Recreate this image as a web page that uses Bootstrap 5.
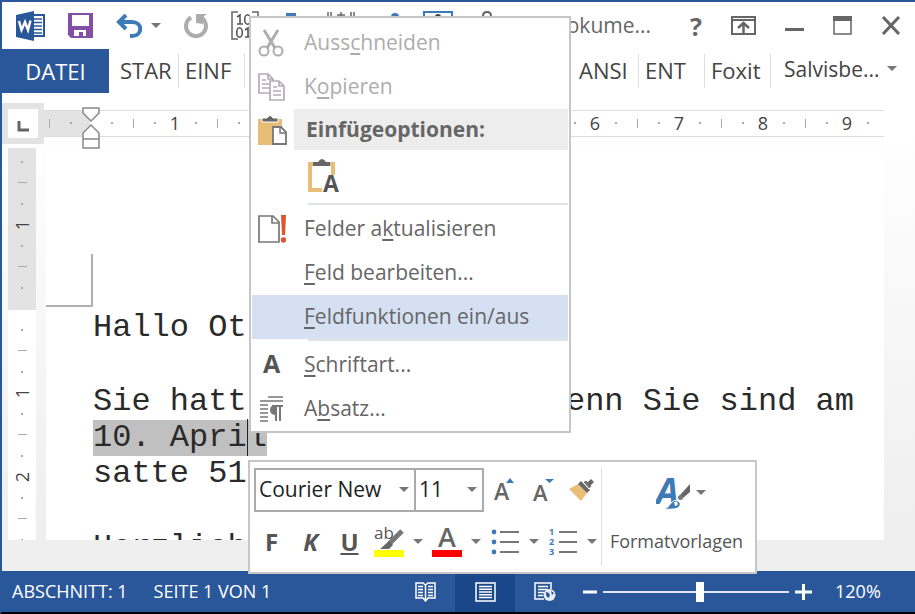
<!DOCTYPE html>
<html lang="de">
<head>
<meta charset="utf-8">
<meta name="viewport" content="width=device-width, initial-scale=1">
<title>Word – Feldfunktionen ein/aus</title>
<link href="https://cdn.jsdelivr.net/npm/bootstrap@5.3.0/dist/css/bootstrap.min.css" rel="stylesheet">
<style>
:root { --word-blue: #2a579a; --ink: #666; --rule: #c6c6c6; }
body { font-family: "Open Sans", "Noto Sans", sans-serif; color: #444; }
button { background: none; border: 0; padding: 0; color: inherit; }
svg { display: block; flex: none; }
.word-window { border-top: 2px solid var(--word-blue); border-left: 2px solid var(--word-blue); border-bottom: 2px solid #000; background: linear-gradient(#fff 20%, #efefef 85%); }

/* title bar */
.title-bar { height: 47px; padding-left: 13px; padding-right: 14px; }
.quick-tools, .covered-tools { gap: 22px; }
.window-tools { gap: 29px; color: #666; }
.doc-title { font-size: 21px; margin-right: 10px; }
.help-mark { font-size: 25px; line-height: 26px; }

/* ribbon tabs */
.ribbon { height: 44px; font-size: 22px; line-height: 44px; }
.ribbon a { color: #444; text-decoration: none; white-space: nowrap; }
.ribbon .file-tab { background: var(--word-blue); color: #fff; width: 107px; text-align: center; }
.tab-item { height: 34px; line-height: 32px; border-right: 1px solid #ddd; padding-left: 6px; }
.tab-narrow { width: 66px; }
.tab-first { width: 70px; padding-left: 11px; }
.account { font-size: 21px; line-height: 36px; padding-left: 13px; width: 144px; }

/* rulers */
.ruler-row { height: 55px; padding-top: 5px; }
.ruler-track { min-width: 0; }
.tab-stop { width: 42px; height: 41px; background: #e3e3e3; border: 6px solid #e3e3e3; flex: none; }
.tab-stop svg { background: #fff; }
.ruler-h { height: 27px; margin-right: 31px; border: solid #ddd; border-width: 1px 0; background: linear-gradient(90deg, #e3e3e3 46px, #fff 46px); padding-left: 5px; overflow: hidden; }
.cell-h { width: 84px; flex: none; text-align: center; font-size: 18px; line-height: 25px;
  background: linear-gradient(#aaa, #aaa) 0 50%/1px 9px no-repeat, linear-gradient(#aaa, #aaa) 21px 50%/2px 2px no-repeat, linear-gradient(#aaa, #aaa) 62px 50%/2px 2px no-repeat; }
.indent-marker { position: absolute; left: 38px; top: -3px; }
.ruler-v { width: 28px; margin-left: 6px; margin-right: 10px; overflow: hidden; background: linear-gradient(#e3e3e3 162px, #fff 162px); }
.cell-v { height: 84px; flex: none;
  background: linear-gradient(#aaa, #aaa) 50% 100%/9px 1px no-repeat, linear-gradient(#aaa, #aaa) 50% calc(100% - 20px)/2px 2px no-repeat, linear-gradient(#aaa, #aaa) 50% calc(100% - 62px)/2px 2px no-repeat; }
.cell-v.cell-short { height: 35px; }
.cell-v span { font-size: 18px; line-height: 18px; writing-mode: vertical-rl; transform: rotate(180deg); }

/* document page */
.workspace { flex: 1 1 0; min-height: 0; }
.sheet { background: #fff; margin-right: 31px; overflow: hidden; padding-right: 30px; }
.corner-mark { width: 47px; height: 53px; margin-top: 106px; border: solid #b0b0b0; border-width: 0 2px 2px 0; }
.doc-text { font-family: "Liberation Mono", monospace; font-size: 32px; line-height: 36px; color: #2a2a2a; padding-left: 47px; padding-top: 3px; white-space: nowrap; }
.doc-text p { margin-bottom: 38px; }
.picked { background: #c0c0c0; display: inline-block; }
.text-caret { border-left: 1px solid #222; }
.below-sheet { height: 31px; background: #efefef; }

/* status bar */
.status-bar { height: 41px; background: var(--word-blue); color: #fff; font-size: 18px; padding-left: 10px; padding-right: 32px; }
.page-info { gap: 26px; }
.view-btn { width: 60px; height: 41px; }
.view-btn.chosen { background: #19478a; }
.zoom-range { appearance: none; background: none; width: 186px; height: 20px; margin: 0 6px; }
.zoom-range::-webkit-slider-runnable-track { height: 2px; background: #dfe6f1; }
.zoom-range::-webkit-slider-thumb { appearance: none; width: 8px; height: 20px; margin-top: -9px; background: #fff; }
.zoom-value { width: 48px; margin-left: 23px; }

/* context menu */
.context-panel { position: absolute; left: 249px; top: 16px; width: 322px; background: #fff; border: 2px solid var(--rule); padding: 3px 1px 0; z-index: 5; }
.menu-line { display: flex; align-items: center; width: 100%; height: 44px; padding-left: 6px; font-size: 21px; color: var(--ink); text-align: left; white-space: nowrap; }
.menu-line .icon-slot { width: 31px; margin-right: 15px; flex: none; }
.menu-line.faded { color: #adadad; }
.menu-line.hovered { background: #d5e0f2; }
.menu-line u { text-underline-offset: 3px; }
.menu-heading { height: 41px; padding-left: 6px; }
.menu-heading h2 { background: #ededed; font-size: 21px; line-height: 41px; color: #666; padding-left: 12px; }
.menu-heading .icon-slot { width: 36px; flex: none; }
.paste-row { height: 53px; padding-left: 54px; padding-top: 8px; }
.menu-rule { height: 2px; margin-left: 56px; margin-bottom: 2px; background: #dfe3e6; }

/* mini toolbar */
.mini-bar { position: absolute; left: 248px; top: 460px; width: 509px; height: 114px; background: #fff; border: 2px solid var(--rule); padding: 6px 4px; z-index: 6; color: #555; }
.mini-select { appearance: none; height: 44px; border: 2px solid #ababab; border-radius: 0; color: #222; font-size: 21px; padding: 0 3px; background: #fff url("data:image/svg+xml,%3Csvg xmlns='http://www.w3.org/2000/svg' viewBox='0 0 10 6'%3E%3Cpath d='M0 0h10L5 5z' fill='%23777'/%3E%3C/svg%3E") right 5px center/10px 6px no-repeat; }
.font-select { width: 162px; }
.size-select { width: 70px; margin-left: -2px; }
.tool-btn { width: 39px; height: 44px; display: flex; align-items: center; justify-content: center; font-size: 24px; line-height: 28px; }
.drop-btn { width: 19px; height: 44px; display: flex; align-items: center; justify-content: center; }
.tools-row { margin-left: -2px; margin-top: 8px; margin-right: -2px; }
.styles-part { border-left: 1px solid #ddd; font-size: 18px; line-height: 27px; }
.styles-icon { height: 50px; padding-left: 8px; }
.styles-label { padding-top: 10px; }
</style>
</head>
<body>
<svg class="d-none" aria-hidden="true">
  <symbol id="caret" viewBox="0 0 10 6"><path d="M0 0h10L5 5z" fill="#777"/></symbol>
</svg>
<div class="word-window d-flex flex-column vh-100 position-relative overflow-hidden">

  <header class="title-bar flex-shrink-0 d-flex align-items-center justify-content-between">
    <div class="quick-tools d-flex align-items-center">
      <svg width="31" height="30" viewBox="0 0 31 30" role="img" aria-label="Word"><path d="M17 4h12v21H17z" fill="#fff" stroke="#2a579a" stroke-width="2"/><path d="M19 8h8M19 11.500h8M19 15h8M19 18.500h8M19 22h8" stroke="#2a579a" stroke-width="1.500"/><path d="M1 4 19 0v30L1 26z" fill="#2a579a"/><path d="M4 10l2.500 9L10 11l3 8 2.500-9.500" fill="none" stroke="#fff" stroke-width="2.400"/></svg>
      <button type="button" aria-label="Speichern"><svg width="25" height="25" viewBox="0 0 25 25"><path d="M0 0h25v25H3l-3-3z" fill="#8450a6"/><path d="M4 2h17v11H4zM6 17h12v6h-3v-4h-4v4H6z" fill="#fff"/></svg></button>
      <div class="d-flex align-items-center gap-2">
        <button type="button" aria-label="Rückgängig"><svg width="28" height="24" viewBox="0 0 28 24"><path d="M11 1 4 8l7 7M4 8h13c11 0 11 14 0 14h-2" fill="none" stroke="#3f7ab8" stroke-width="4"/></svg></button>
        <button type="button" aria-label="Rückgängig-Liste"><svg width="10" height="6"><use href="#caret"/></svg></button>
      </div>
      <button type="button" aria-label="Wiederholen"><svg width="26" height="26" viewBox="0 0 26 26"><path d="M8 4.500a10 10 0 1 0 10 0" fill="none" stroke="#adadad" stroke-width="4"/><path d="M13 1h11l-3 2-1 8-7-1z" fill="#adadad"/></svg></button>
      <svg width="30" height="30" viewBox="0 0 30 30"><path d="M7 1H1v27h6M21 1h6v27h-6" fill="none" stroke="#666" stroke-width="1.500"/><g fill="none" stroke="#555" stroke-width="1.600"><path d="M6 6l3-2v9M6 13h6M14 19l3-2v9M14 26h6"/><ellipse cx="16.500" cy="8.500" rx="2.800" ry="4.800"/><ellipse cx="8.500" cy="21.500" rx="2.800" ry="4.800"/></g></svg>
      <div class="covered-tools d-flex align-items-start">
        <svg width="22" height="24" viewBox="0 0 22 24"><path d="M3 2h10v14H3z" fill="#3f7ab8"/></svg>
        <svg width="28" height="26" viewBox="0 0 28 26"><path d="M1 1v6M4 1v6M24 1v6M27 1v6M14 1v14M10 4h8" stroke="#666" stroke-width="1.500"/></svg>
        <svg width="24" height="24" viewBox="0 0 24 24"><circle cx="18" cy="6" r="4" fill="#3f7ab8"/></svg>
        <svg width="30" height="30" viewBox="0 0 30 30"><path d="M1 1h28v28H1z" fill="none" stroke="#3f7ab8" stroke-width="2"/><circle cx="15" cy="6" r="3" fill="#444"/></svg>
        <svg width="24" height="30" viewBox="0 0 24 30"><path d="M8 5q0-4 4-4t4 4v4M12 5v5" fill="none" stroke="#666" stroke-width="2"/></svg>
      </div>
    </div>
    <div class="window-tools d-flex align-items-center">
      <span class="doc-title">okume...</span>
      <button type="button" class="help-mark fw-bold" aria-label="Hilfe">?</button>
      <button type="button" aria-label="Menüband-Anzeigeoptionen"><svg width="25" height="19" viewBox="0 0 25 19"><path d="M1 1h23v17H1zM1 4h23" fill="none" stroke="#666" stroke-width="2"/><path d="M12.500 17V7M7 12l5.500-5 5.500 5" fill="none" stroke="#666" stroke-width="2.500"/></svg></button>
      <button type="button" aria-label="Minimieren"><svg width="19" height="19" viewBox="0 0 19 19"><path d="M0 13.500h19" stroke="#666" stroke-width="3"/></svg></button>
      <button type="button" aria-label="Maximieren"><svg width="19" height="19" viewBox="0 0 19 19"><path d="M1 1h17v17H1z" fill="none" stroke="#666" stroke-width="1.500"/><path d="M0 0h19v5H0z" fill="#666"/></svg></button>
      <button type="button" aria-label="Schließen"><svg width="20" height="19" viewBox="0 0 20 19"><path d="M2 1l16 17M18 1 2 18" stroke="#666" stroke-width="3"/></svg></button>
    </div>
  </header>

  <nav class="ribbon flex-shrink-0 d-flex justify-content-between" aria-label="Menüband">
    <div class="d-flex align-items-center">
      <a href="#" class="file-tab">DATEI</a>
      <a href="#" class="tab-item tab-first">STAR</a>
      <a href="#" class="tab-item tab-narrow">EINF</a>
    </div>
    <div class="d-flex align-items-center">
      <a href="#" class="tab-item tab-narrow">ANSI</a>
      <a href="#" class="tab-item tab-narrow">ENT</a>
      <a href="#" class="tab-item tab-narrow">Foxit</a>
      <a href="#" class="account d-flex align-items-center gap-2 pb-1">Salvisbe... <svg width="10" height="6"><use href="#caret"/></svg></a>
    </div>
  </nav>

  <div class="ruler-row flex-shrink-0 d-flex align-items-center">
    <button type="button" class="tab-stop" aria-label="Tabstopp"><svg width="30" height="29" viewBox="0 0 30 29"><path d="M11 12v9h10" fill="none" stroke="#666" stroke-width="3"/></svg></button>
    <div class="ruler-track position-relative flex-grow-1">
      <div class="ruler-h d-flex">
        <span class="cell-h"></span><span class="cell-h">1</span><span class="cell-h"></span><span class="cell-h"></span><span class="cell-h"></span><span class="cell-h"></span><span class="cell-h">6</span><span class="cell-h">7</span><span class="cell-h">8</span><span class="cell-h">9</span>
      </div>
      <svg class="indent-marker" width="18" height="42" viewBox="0 0 18 42"><path d="M1 1h16v5L9 14 1 6zM9 18l8 8v6H1v-6zM1 32h16v9H1z" fill="#fff" stroke="#888" stroke-width="1.500"/></svg>
    </div>
  </div>

  <main class="workspace d-flex overflow-hidden">
    <div class="ruler-v d-flex flex-column flex-shrink-0">
      <div class="cell-v cell-short"></div>
      <div class="cell-v d-flex align-items-center justify-content-center"><span>1</span></div>
      <div class="cell-v"></div>
      <div class="cell-v d-flex align-items-center justify-content-center"><span>1</span></div>
      <div class="cell-v d-flex align-items-center justify-content-center"><span>2</span></div>
      <div class="cell-v"></div>
    </div>
    <article class="sheet flex-grow-1">
      <div class="corner-mark"></div>
      <div class="doc-text">
        <p>Hallo Ot</p>
        <div class="d-flex justify-content-between"><span>Sie hatt</span><span>enn Sie sind am</span></div>
        <div><span class="picked">10. Apri<span class="text-caret">l</span></span></div>
        <p>satte 51</p>
        <p>Herzlich</p>
      </div>
    </article>
  </main>
  <div class="below-sheet flex-shrink-0"></div>

  <footer class="status-bar flex-shrink-0 d-flex align-items-center justify-content-between">
    <div class="page-info d-flex"><span>ABSCHNITT: 1</span><span>SEITE 1 VON 1</span></div>
    <div class="d-flex align-items-center">
      <button type="button" class="view-btn d-flex align-items-center justify-content-center" aria-label="Lesemodus"><svg width="21" height="20" viewBox="0 0 21 20" fill="none" stroke="#fff" stroke-width="1.500"><path d="M1 1h7l2.500 2L13 1h7v15h-7l-2.500 3L8 16H1zM10.500 3v15"/><path d="M3 4.500h5M3 7.500h5M3 10.500h5M3 13.500h5M13 4.500h5M13 7.500h5M13 10.500h5M13 13.500h5"/></svg></button>
      <button type="button" class="view-btn chosen d-flex align-items-center justify-content-center" aria-label="Seitenlayout"><svg width="21" height="20" viewBox="0 0 21 20" fill="none" stroke="#fff" stroke-width="1.500"><path d="M1 1h19v18H1zM4 4.500h13M4 7.200h13M4 10h13M4 12.700h13M4 15.500h13"/></svg></button>
      <button type="button" class="view-btn d-flex align-items-center justify-content-center" aria-label="Weblayout"><svg width="22" height="20" viewBox="0 0 22 20"><path d="M17 7V1H1v16h9M4 4.500h10M4 7.500h10M4 10.500h6M4 13.500h5" fill="none" stroke="#fff" stroke-width="1.500"/><circle cx="15.500" cy="13" r="6" fill="#e8eef7"/><path d="M12 10l3 1 1 3-2 2-2-3zM17 9l3 2-2 2z" fill="#2a579a"/></svg></button>
      <button type="button" class="ms-2" aria-label="Verkleinern"><svg width="14" height="18" viewBox="0 0 14 18"><path d="M0 9h14" stroke="#fff" stroke-width="3"/></svg></button>
      <input type="range" class="zoom-range" min="0" max="100" value="52" aria-label="Zoom">
      <button type="button" aria-label="Vergrößern"><svg width="17" height="18" viewBox="0 0 17 18"><path d="M0 9h17M8.500 1v16" stroke="#fff" stroke-width="3"/></svg></button>
      <span class="zoom-value">120%</span>
    </div>
  </footer>
</div>

<div class="context-panel" role="menu">
  <button type="button" class="menu-line faded" role="menuitem"><span class="icon-slot"><svg width="26" height="28" viewBox="0 0 26 28" fill="none" stroke="#adadad"><path d="M6 1l11 18M20 1 9 19" stroke-width="3"/><circle cx="6" cy="22" r="4.500" stroke-width="2"/><circle cx="20" cy="22" r="4.500" stroke-width="2"/></svg></span><span>Auss<u>c</u>hneiden</span></button>
  <button type="button" class="menu-line faded" role="menuitem"><span class="icon-slot"><svg width="27" height="28" viewBox="0 0 27 28" fill="#fff" stroke="#b5abb5" stroke-width="1.700"><path d="M1 1h9l5 5v14H1zM10 1v5h5"/><path d="M4 7h4M4 11h7M4 15h7"/><path d="M12 8h9l5 5v14H12zM21 8v5h5"/><path d="M15 14h4M15 18h8M15 22h8"/></svg></span><span>K<u>o</u>pieren</span></button>
  <div class="menu-heading d-flex align-items-center">
    <span class="icon-slot"><svg width="29" height="30" viewBox="0 0 29 30"><path d="M0 4h24v26H0z" fill="#e8bd78"/><path d="M4 7V3h5q3-5 6 0h5v4z" fill="#666" stroke="#fff"/><path d="M15 12h8l5 5v12H15z" fill="#fff" stroke="#777" stroke-width="1.800"/><path d="M22 12v6h6" fill="none" stroke="#777" stroke-width="1.500"/></svg></span>
    <h2 class="flex-grow-1 fw-bold mb-0">Einfügeoptionen:</h2>
  </div>
  <div class="paste-row"><button type="button" aria-label="Nur den Text übernehmen"><svg width="34" height="36" viewBox="0 0 34 36"><path d="M7 6H4v26h12M24 6h3v11" fill="none" stroke="#e8bd78" stroke-width="4"/><path d="M7 8V4h5q4-6 8 0h4v4z" fill="#666"/><text x="17" y="34" font-size="23" font-weight="700" fill="#555">A</text></svg></button></div>
  <div class="menu-rule"></div>
  <button type="button" class="menu-line" role="menuitem"><span class="icon-slot"><svg width="28" height="28" viewBox="0 0 28 28"><path d="M1 1h14l6 6v20H1zM14 1v7h7" fill="#fff" stroke="#777" stroke-width="1.700"/><path d="M23 0h5l-1 20h-3z" fill="#dd5430"/><circle cx="25.500" cy="25" r="2.700" fill="#dd5430"/></svg></span><span>Felder a<u>k</u>tualisieren</span></button>
  <button type="button" class="menu-line" role="menuitem"><span class="icon-slot"></span><span><u>F</u>eld bearbeiten...</span></button>
  <button type="button" class="menu-line hovered" role="menuitem"><span class="icon-slot"></span><span><u>F</u>eldfunktionen ein/aus</span></button>
  <div class="menu-rule"></div>
  <button type="button" class="menu-line" role="menuitem"><span class="icon-slot"><svg width="27" height="22" viewBox="0 0 27 22"><text x="5" y="19" font-size="25" font-weight="700" fill="#555">A</text></svg></span><span><u>S</u>chriftart...</span></button>
  <button type="button" class="menu-line" role="menuitem"><span class="icon-slot"><svg width="27" height="26" viewBox="0 0 27 26"><path d="M10 1h15M2 5h23M2 9h8M2 13h8M2 17h8M2 21h8M2 25h8" stroke="#777" stroke-width="1.500"/><path d="M18 10v15M22 10v15M14 10h11" stroke="#777" stroke-width="2"/><path d="M18 9q-6 0-6 5t6 5z" fill="#777"/></svg></span><span>A<u>b</u>satz...</span></button>
</div>

<div class="mini-bar d-flex" role="toolbar" aria-label="Minisymbolleiste">
  <div>
    <div class="d-flex">
      <select class="mini-select font-select" aria-label="Schriftart"><option>Courier New</option></select>
      <select class="mini-select size-select" aria-label="Schriftgrad"><option>11</option></select>
      <button type="button" class="tool-btn" aria-label="Schrift vergrößern"><svg width="22" height="24" viewBox="0 0 22 24"><text x="1" y="22" font-size="23" font-weight="600" fill="#666">A</text><path d="M13 5l4-5 4 5z" fill="#3f7ab8"/></svg></button>
      <button type="button" class="tool-btn" aria-label="Schrift verkleinern"><svg width="22" height="24" viewBox="0 0 22 24"><text x="1" y="23" font-size="22" font-weight="600" fill="#666">A</text><path d="M13 1h9l-4.500 4z" fill="#3f7ab8"/></svg></button>
      <button type="button" class="tool-btn" aria-label="Format übertragen"><svg width="26" height="24" viewBox="0 0 26 24"><path d="M0 11 9 6l9 9-6 8z" fill="#e8bd78"/><path d="M9 6l3-3 9 9-3 3z" fill="#666"/><path d="M14 4l3-2 6 6-3 3z" fill="#777" stroke="#fff"/><path d="M18 5l4-4 3 3-4 4z" fill="#666"/></svg></button>
    </div>
    <div class="tools-row d-flex">
      <button type="button" class="tool-btn fw-bold" aria-label="Fett">F</button>
      <button type="button" class="tool-btn fw-bold fst-italic" aria-label="Kursiv">K</button>
      <button type="button" class="tool-btn fw-bold text-decoration-underline" aria-label="Unterstrichen">U</button>
      <button type="button" class="tool-btn" aria-label="Texthervorhebung"><svg width="30" height="30" viewBox="0 0 30 30"><path d="M0 23h30v7H0z" fill="#ff0"/><text x="0" y="12" font-size="17" fill="#555">ab</text><path d="M28 4 15 17" stroke="#777" stroke-width="5"/><path d="M15 14l4 4-4 4H6z" fill="#666"/></svg></button>
      <button type="button" class="drop-btn" aria-label="Hervorhebungsfarben"><svg width="10" height="6"><use href="#caret"/></svg></button>
      <button type="button" class="tool-btn" aria-label="Schriftfarbe"><svg width="30" height="30" viewBox="0 0 30 30"><path d="M0 23h30v7H0z" fill="red"/><text x="6" y="20" font-size="27" font-weight="600" fill="#666">A</text></svg></button>
      <button type="button" class="drop-btn" aria-label="Schriftfarben"><svg width="10" height="6"><use href="#caret"/></svg></button>
      <button type="button" class="tool-btn" aria-label="Aufzählungszeichen"><svg width="28" height="26" viewBox="0 0 28 26"><path d="M9 3h19M9 13h19M9 23h19" stroke="#777" stroke-width="2"/><g fill="#3f7ab8"><circle cx="3" cy="3" r="2.400"/><circle cx="3" cy="13" r="2.400"/><circle cx="3" cy="23" r="2.400"/></g></svg></button>
      <button type="button" class="drop-btn" aria-label="Aufzählungsbibliothek"><svg width="10" height="6"><use href="#caret"/></svg></button>
      <button type="button" class="tool-btn" aria-label="Nummerierung"><svg width="28" height="28" viewBox="0 0 28 28"><path d="M10 4h18M10 14h18M10 24h18" stroke="#777" stroke-width="2"/><g fill="#3f7ab8" font-size="9" font-weight="700"><text x="0" y="7">1</text><text x="0" y="17">2</text><text x="0" y="27">3</text></g></svg></button>
      <button type="button" class="drop-btn" aria-label="Nummerierungsbibliothek"><svg width="10" height="6"><use href="#caret"/></svg></button>
    </div>
  </div>
  <button type="button" class="styles-part flex-grow-1 d-flex flex-column align-items-center">
    <span class="styles-icon d-flex align-items-center justify-content-center gap-1">
      <svg width="36" height="34" viewBox="0 0 36 34"><text x="0" y="28" font-size="36" font-weight="700" font-style="italic" fill="#3f7ab8">A</text><path d="M34 8v8l-7 6-3-3z" fill="#666"/><circle cx="24.500" cy="21.500" r="2.500" fill="#777"/><path d="M8 33q4-1 7-6 3-4 7-2t1 6q-3 3-15 2z" fill="#3f7ab8" stroke="#fff"/><path d="M18 26q3-1 4 2-1 2-3 2z" fill="#fff"/></svg>
      <svg width="10" height="6"><use href="#caret"/></svg>
    </span>
    <span class="styles-label">Formatvorlagen</span>
  </button>
</div>
<script src="https://cdn.jsdelivr.net/npm/bootstrap@5.3.0/dist/js/bootstrap.bundle.min.js"></script>
</body>
</html>
